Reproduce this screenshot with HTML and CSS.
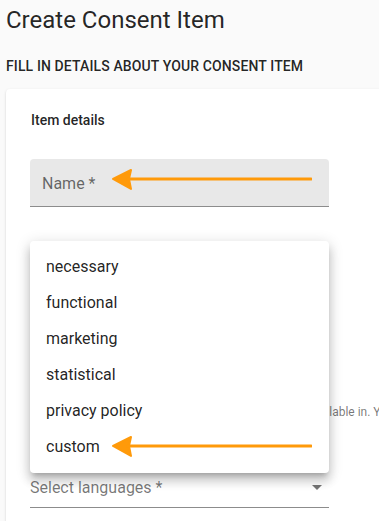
FILE: index.html
```html
<!DOCTYPE html>
<html lang="en">
<head>
<meta charset="utf-8">
<title>Create Consent Item</title>
<link rel="stylesheet" href="styles.css">
</head>
<body>
<div class="page">
  <h1 class="title">Create Consent Item</h1>
  <h2 class="subtitle">Fill in details about your consent item</h2>
  <div class="card">
    <div class="section-title">Item details</div>
    <div class="filled-field">
      <span class="filled-label">Name *</span>
      <svg class="arrow" viewBox="0 0 200 24" width="200" height="24" aria-hidden="true">
        <path d="M1 11 L19 2 L17 11 L19 21 Z" fill="#ff9a0a" stroke="#ff9a0a" stroke-width="2" stroke-linejoin="round"/>
        <path d="M16 11 L199 11" stroke="#ff9a0a" stroke-width="3" stroke-linecap="round"/>
      </svg>
    </div>
    <div class="category-field"></div>
    <div class="helper">Select all of the languages that this consent item is avai<span>lable in. You can add translations later.</span></div>
    <div class="select-field">
      <span class="std-label">Select languages *</span>
      <span class="caret"></span>
    </div>

    <ul class="menu">
      <li class="menu-item">necessary</li>
      <li class="menu-item">functional</li>
      <li class="menu-item">marketing</li>
      <li class="menu-item">statistical</li>
      <li class="menu-item">privacy policy</li>
      <li class="menu-item">custom
        <svg class="arrow arrow-item" viewBox="0 0 200 24" width="200" height="24" aria-hidden="true">
          <path d="M1 11 L19 2 L17 11 L19 21 Z" fill="#ff9a0a" stroke="#ff9a0a" stroke-width="2" stroke-linejoin="round"/>
          <path d="M16 11 L199 11" stroke="#ff9a0a" stroke-width="3" stroke-linecap="round"/>
        </svg>
      </li>
    </ul>
  </div>
</div>
</body>
</html>
```
FILE: styles.css
```css
html, body {
  margin: 0;
  padding: 0;
}
body {
  background: #fafafa;
  font-family: Roboto, "Liberation Sans", Arial, sans-serif;
  color: rgba(0, 0, 0, 0.87);
  overflow: hidden;
  width: 379px;
  height: 521px;
}
.page {
  padding-left: 6px;
}
.title {
  margin: 4px 0 0;
  font-size: 24px;
  line-height: 32px;
  font-weight: 400;
}
.subtitle {
  margin: 20px 0 0;
  font-size: 14px;
  line-height: 20px;
  font-weight: 500;
  letter-spacing: 0.12px;
  text-transform: uppercase;
}
.card {
  position: relative;
  margin-top: 13px;
  width: 560px;
  height: 460px;
  background: #fff;
  border-radius: 4px;
  box-shadow: 0 2px 1px -1px rgba(0,0,0,0.2), 0 1px 1px 0 rgba(0,0,0,0.14), 0 1px 3px 0 rgba(0,0,0,0.12);
  padding: 21px 24px 0;
  box-sizing: border-box;
}
.section-title {
  font-size: 14px;
  line-height: 20px;
  font-weight: 500;
  padding-left: 1px;
}
.filled-field {
  position: relative;
  margin-top: 29px;
  width: 299px;
  height: 47px;
  background: #e8e8e8;
  border-radius: 4px 4px 0 0;
  border-bottom: 1px solid #8c8c8c;
  display: flex;
  align-items: center;
}
.filled-label {
  padding-left: 12px;
  font-size: 16px;
  color: rgba(0, 0, 0, 0.58);
  line-height: 20px;
  padding-top: 2px;
}
.arrow {
  position: absolute;
  left: 82px;
  top: 9px;
}
.category-field {
  margin-top: 34px;
  width: 299px;
  height: 41px;
}
.std-label {
  font-size: 16px;
  color: rgba(0, 0, 0, 0.54);
}
.helper {
  margin-top: 122px;
  padding-left: 3px;
  font-size: 12px;
  line-height: 16px;
  color: rgba(0, 0, 0, 0.54);
  white-space: nowrap;
}
.select-field {
  position: relative;
  margin-top: 58px;
  width: 299px;
  height: 29px;
  border-bottom: 1px solid #8c8c8c;
  display: flex;
  align-items: flex-start;
}
.select-field .std-label {
  line-height: 20px;
}
.caret {
  position: absolute;
  right: 7px;
  top: 7px;
  width: 0;
  height: 0;
  border-left: 5px solid transparent;
  border-right: 5px solid transparent;
  border-top: 5px solid rgba(0, 0, 0, 0.54);
}
.menu {
  position: absolute;
  left: 24px;
  top: 152px;
  width: 299px;
  margin: 0;
  padding: 8px 0;
  list-style: none;
  background: #fff;
  border-radius: 4px;
  box-shadow: 0 5px 5px -3px rgba(0,0,0,0.2), 0 8px 10px 1px rgba(0,0,0,0.14), 0 3px 14px 2px rgba(0,0,0,0.12);
}
.menu-item {
  position: relative;
  height: 36px;
  line-height: 36px;
  padding-left: 16px;
  font-size: 16px;
  color: rgba(0, 0, 0, 0.87);
}
.arrow-item {
  left: 82px;
  top: 6px;
}
```
